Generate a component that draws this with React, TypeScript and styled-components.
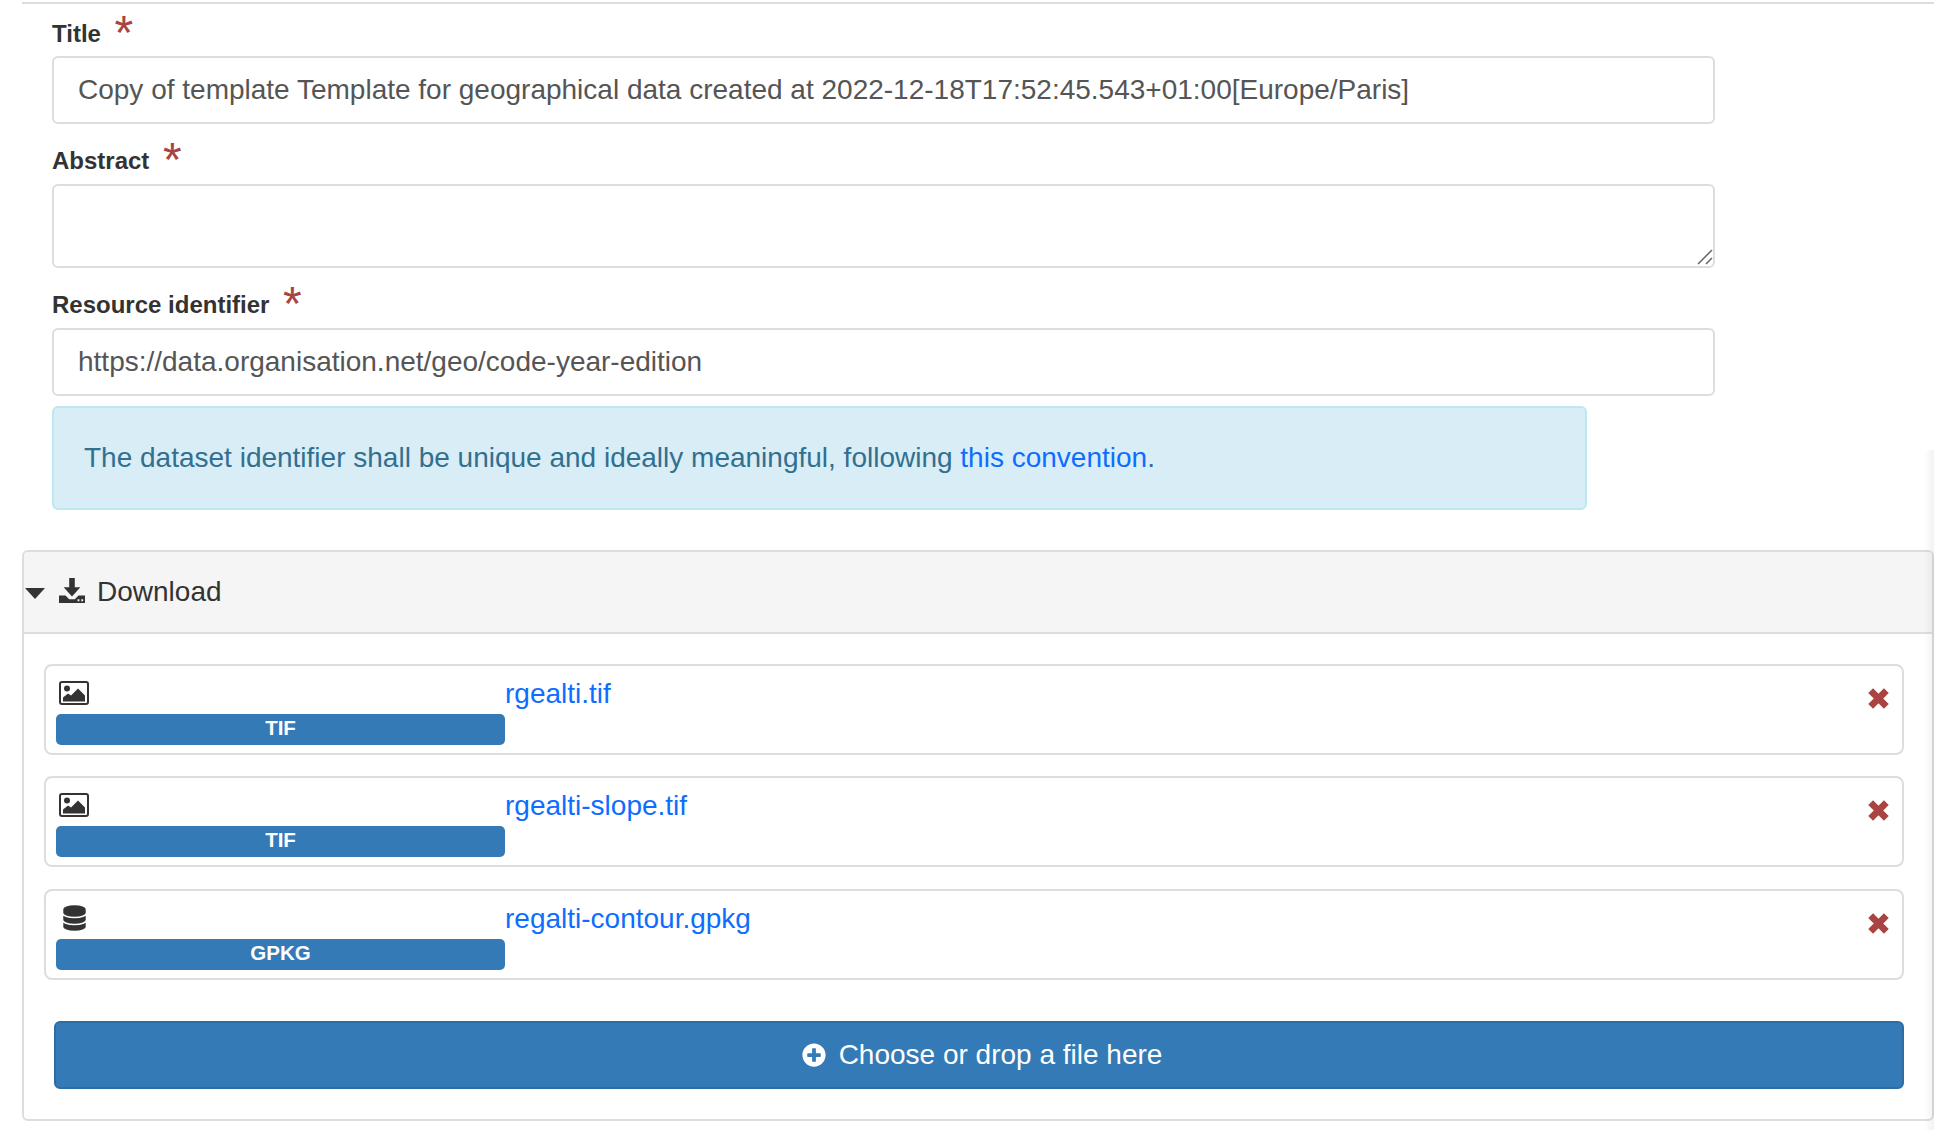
import React from "react";
import styled, { createGlobalStyle } from "styled-components";
import { FaPlusCircle } from "react-icons/fa";

const GlobalStyle = createGlobalStyle`
  html, body {
    margin: 0;
    padding: 0;
    background: #fff;
    overflow: hidden;
  }
  * {
    box-sizing: border-box;
  }
`;

const Page = styled.div`
  position: relative;
  width: 1934px;
  height: 1130px;
  padding: 2px 0 0 22px;
  overflow: hidden;
  font-family: "Liberation Sans", Arial, sans-serif;
  color: #333;
`;

const Form = styled.div`
  display: flex;
  flex-direction: column;
  border-top: 2px solid #ddd;
  padding: 0 0 0 30px;
  width: 1912px;
`;

const Label = styled.label<{ $first?: boolean }>`
  display: block;
  height: ${(props) => (props.$first ? "52px" : "60px")};
  padding-top: ${(props) => (props.$first ? "12px" : "19px")};
  font-size: 24px;
  line-height: 34px;
  font-weight: 700;
  color: #333;
  white-space: nowrap;
`;

const Required = styled.span`
  position: relative;
  top: 7px;
  margin-left: 7px;
  font-size: 48px;
  line-height: 20px;
  font-weight: 400;
  color: #a94442;
`;

const TextField = styled.div`
  width: 1663px;
  height: 68px;
  padding: 0 24px;
  display: flex;
  align-items: center;
  background: #fff;
  border: 2px solid #ddd;
  border-radius: 6px;
  font-size: 28px;
  color: #555;
  white-space: nowrap;
`;

const TextArea = styled(TextField)`
  position: relative;
  height: 84px;
`;

const Grip = styled.svg`
  position: absolute;
  right: 0;
  bottom: 1px;
  width: 16px;
  height: 16px;
`;

const Alert = styled.div`
  width: 1535px;
  height: 104px;
  margin-top: 10px;
  padding: 0 30px;
  display: flex;
  align-items: center;
  background: #d9edf7;
  border: 2px solid #bce8f1;
  border-radius: 6px;
  font-size: 28px;
  color: #31708f;
  white-space: pre;
`;

const AlertLink = styled.a`
  color: #0d6efd;
  text-decoration: none;
`;

const Panel = styled.section`
  width: 1912px;
  height: 571px;
  margin-top: 40px;
  background: #fff;
  border: 2px solid #ddd;
  border-radius: 6px;
`;

const PanelHeading = styled.header`
  height: 82px;
  display: flex;
  align-items: center;
  background: #f5f5f5;
  border-bottom: 2px solid #ddd;
  border-radius: 4px 4px 0 0;
  font-size: 28px;
  color: #333;
`;

const Caret = styled.span`
  width: 0;
  height: 0;
  margin: 3px 14px 0 1px;
  border-left: 10px solid transparent;
  border-right: 10px solid transparent;
  border-top: 11px solid #333;
`;

const HeadingIcon = styled.svg`
  width: 26px;
  height: 26px;
  margin: 0 12px 4px 0;
  fill: #333;
`;

const PanelBody = styled.div`
  display: flex;
  flex-direction: column;
  padding: 30px 28px 0 20px;
`;

const FileRow = styled.div`
  display: flex;
  justify-content: space-between;
  height: 91px;
  margin-bottom: 21px;
  padding: 10px 9px 8px 10px;
  border: 2px solid #ddd;
  border-radius: 8px;

  & + & + & {
    margin-top: 1px;
  }
`;

const FileType = styled.div`
  width: 449px;
  display: flex;
  flex-direction: column;
`;

const TypeIcon = styled.div`
  width: 36px;
  height: 39px;
  display: flex;
  align-items: center;
  justify-content: center;
`;

const ImageGlyph = styled.svg`
  width: 30px;
  height: 24px;
  margin-bottom: 4px;
`;

const DatabaseGlyph = styled.svg`
  width: 25px;
  height: 28px;
  margin-bottom: 4px;
`;

const TypeBadge = styled.div`
  height: 32px;
  padding-bottom: 2px;
  display: flex;
  align-items: center;
  justify-content: center;
  background: #337ab7;
  border-radius: 5px;
  font-size: 20.5px;
  font-weight: 700;
  color: #fff;
`;

const FileLink = styled.a`
  flex: 1;
  font-size: 28px;
  line-height: 36px;
  color: #0d6efd;
  text-decoration: none;
`;

const RemoveIcon = styled.svg`
  width: 23px;
  height: 23px;
  margin: 11px 3px 0 0;
`;

const DropButton = styled.button`
  height: 68px;
  margin: 20px 0 0 10px;
  padding: 0 0 0 6px;
  display: flex;
  align-items: center;
  justify-content: center;
  gap: 13px;
  background: #337ab7;
  border: 2px solid #2e6da4;
  border-radius: 6px;
  font-family: inherit;
  font-size: 28px;
  color: #fff;
`;

const EdgeShadow = styled.div`
  position: absolute;
  top: 450px;
  right: 0;
  bottom: 0;
  width: 10px;
  background: linear-gradient(to right, rgba(0, 0, 0, 0), rgba(0, 0, 0, 0.05));
`;

const ImageIcon = () => (
  <ImageGlyph viewBox="0 0 30 24">
    <rect x="1" y="1" width="28" height="22" rx="2" fill="#fff" stroke="#333" strokeWidth="2" />
    <circle cx="8" cy="7.5" r="3" fill="#333" />
    <path d="M4 20.5v-4l5-4 3 2 7-7 7 7v6z" fill="#333" />
  </ImageGlyph>
);

const DatabaseIcon = () => (
  <DatabaseGlyph viewBox="0 0 25 28">
    {[14, 7, 0].map((offset) => (
      <path
        key={offset}
        d={`M0.5 ${offset + 5}a12 4.5 0 0 1 24 0v4a12 4.5 0 0 1-24 0z`}
        fill="#333"
        stroke="#fff"
        strokeWidth="1.6"
      />
    ))}
  </DatabaseGlyph>
);

const files = [
  { name: "rgealti.tif", type: "TIF", icon: <ImageIcon /> },
  { name: "rgealti-slope.tif", type: "TIF", icon: <ImageIcon /> },
  { name: "regalti-contour.gpkg", type: "GPKG", icon: <DatabaseIcon /> },
];

const App: React.FC = () => (
  <Page>
    <GlobalStyle />
    <Form>
      <Label $first>
        Title <Required>*</Required>
      </Label>
      <TextField>
        Copy of template Template for geographical data created at
        2022-12-18T17:52:45.543+01:00[Europe/Paris]
      </TextField>
      <Label>
        Abstract <Required>*</Required>
      </Label>
      <TextArea>
        <Grip viewBox="0 0 16 16">
          <path d="M1 15L15 1M9 15L15 9" stroke="#666" strokeWidth="1.5" />
        </Grip>
      </TextArea>
      <Label>
        Resource identifier <Required>*</Required>
      </Label>
      <TextField>https://data.organisation.net/geo/code-year-edition</TextField>
      <Alert>
        The dataset identifier shall be unique and ideally meaningful, following{" "}
        <AlertLink href="#">this convention</AlertLink>.
      </Alert>
    </Form>
    <Panel>
      <PanelHeading>
        <Caret />
        <HeadingIcon viewBox="0 0 28 28">
          <path d="M11 1h6v10h6l-9 10-9-10h6zM0 20h7l4 4h6l4-4h7v8H0zM20 24h2v2h-2zM24 24h2v2h-2z" fillRule="evenodd" />
        </HeadingIcon>
        Download
      </PanelHeading>
      <PanelBody>
        {files.map((file) => (
          <FileRow key={file.name}>
            <FileType>
              <TypeIcon>{file.icon}</TypeIcon>
              <TypeBadge>{file.type}</TypeBadge>
            </FileType>
            <FileLink href="#">{file.name}</FileLink>
            <RemoveIcon viewBox="0 0 22 22">
              <path d="M3.5 3.5L18.5 18.5M18.5 3.5L3.5 18.5" stroke="#a94442" strokeWidth="6.5" />
            </RemoveIcon>
          </FileRow>
        ))}
        <DropButton>
          <FaPlusCircle size={24} />
          Choose or drop a file here
        </DropButton>
      </PanelBody>
    </Panel>
    <EdgeShadow />
  </Page>
);

export default App;
